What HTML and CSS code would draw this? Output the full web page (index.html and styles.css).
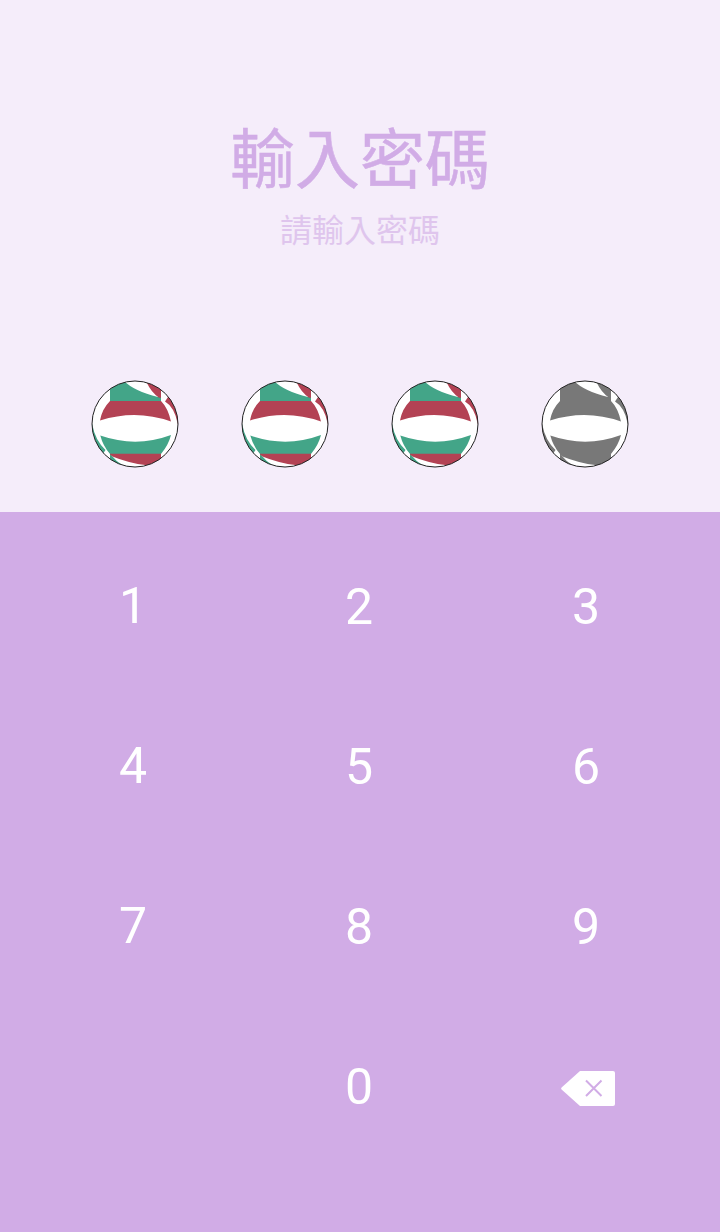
FILE: index.html
```html
<!DOCTYPE html>
<html lang="zh-Hant">

<head>
    <meta charset="UTF-8">
    <meta name="viewport" content="width=device-width, initial-scale=1.0">
    <title>輸入密碼</title>
    <link rel="stylesheet" href="styles.css">
</head>

<body>
    <svg class="defs" width="0" height="0">
        <clipPath id="ball-clip">
            <circle cx="45" cy="45" r="43" />
        </clipPath>
        <symbol id="ball" viewBox="0 0 90 90">
            <circle cx="45" cy="45" r="43" fill="#fff" />
            <g clip-path="url(#ball-clip)">
                <!-- top panels -->
                <path class="green" d="M20 0H36L34 2Q44 12 68 18L71 18V22.3H20Z" />
                <path class="red" d="M54 0H71V18.7H69Q61 13 56.7 3.5Z" />
                <path class="red" d="M75 22.5L78 18L86 18L92 45H87.8Q84.5 28 75 22.5Z" />
                <!-- middle panels -->
                <path class="red" d="M20 22H71Q78 29 81 42.5Q46 30 10 41.5Q12 30 20 22Z" />
                <path class="green" d="M10.3 56.5Q46 69 81 56Q78.5 66 71 75H20Q13 67 10.3 56.5Z" />
                <!-- bottom panels -->
                <path class="red" d="M20 74.7H71V90H57V86.3Q38 84 22.5 77.5L20 76Z" />
                <path class="green" d="M0 45H2.2Q5 61 15.5 71L13.5 74L0 70Z" />
                <path class="green" d="M20 75.5L22.5 77.5Q26 82 31 85L28 90L20 82Z" />
            </g>
            <circle cx="45" cy="45" r="43" fill="none" stroke="#222" stroke-width="1" />
        </symbol>
    </svg>

    <div class="header">
        <h1>輸入密碼</h1>
        <p>請輸入密碼</p>
        <div class="dots">
            <svg class="ball"><use href="#ball" /></svg>
            <svg class="ball"><use href="#ball" /></svg>
            <svg class="ball"><use href="#ball" /></svg>
            <svg class="ball empty"><use href="#ball" /></svg>
        </div>
    </div>

    <div class="keypad">
        <button>1</button>
        <button>2</button>
        <button>3</button>
        <button>4</button>
        <button>5</button>
        <button>6</button>
        <button>7</button>
        <button>8</button>
        <button>9</button>
        <span></span>
        <button>0</button>
        <button class="delete" aria-label="刪除">
            <svg width="54" height="35" viewBox="0 0 54 35">
                <path d="M19 0H52Q54 0 54 2V33Q54 35 52 35H19L.6 18.6Q-.4 17.5.6 16.4Z" fill="#fff" />
                <path d="M25 9.500L40.500 25M40.500 9.500L25 25" stroke="#d1ace6" stroke-width="2" />
            </svg>
        </button>
    </div>
</body>

</html>
```
FILE: styles.css
```css
body {
    margin: 0;
    height: 1232px;
    background: #f5edfa;
    font-family: Roboto, "Noto Sans CJK TC", sans-serif;
}

.defs {
    display: block;
}

.header {
    box-sizing: border-box;
    height: 512px;
    padding-top: 114px;
    text-align: center;
    color: #d1ace6;
}

.header h1 {
    margin: 0;
    font-size: 65px;
    font-weight: 400;
    line-height: 94px;
    -webkit-text-stroke: 0.5px #d1ace6;
}

.header p {
    margin: -1px 0 0;
    font-size: 32px;
    line-height: 48px;
    opacity: 0.6;
}

.dots {
    display: flex;
    justify-content: center;
    gap: 60px;
    margin-top: 124px;
}

.ball {
    --panel-red: #b34254;
    --panel-green: #43a588;
    width: 90px;
    height: 90px;
}

/* digit not entered yet */
.ball.empty {
    --panel-red: #787878;
    --panel-green: #787878;
}

.red {
    fill: var(--panel-red);
}

.green {
    fill: var(--panel-green);
}

.keypad {
    box-sizing: border-box;
    height: 720px;
    padding: 15px 20px 0;
    display: grid;
    grid-template-columns: 226px 226px 228px;
    grid-auto-rows: 160px;
    background: #d1ace6;
}

.keypad button {
    padding: 0;
    border: none;
    background: none;
    color: #fff;
    font-family: Roboto, sans-serif;
    font-size: 50px;
    cursor: pointer;
}

/* first column sits a touch higher */
.keypad button:nth-child(3n + 1) {
    padding-bottom: 2px;
}

.keypad .delete {
    padding: 3px 0 0 3px;
}

.delete svg {
    display: block;
    margin: 0 auto;
}
```
